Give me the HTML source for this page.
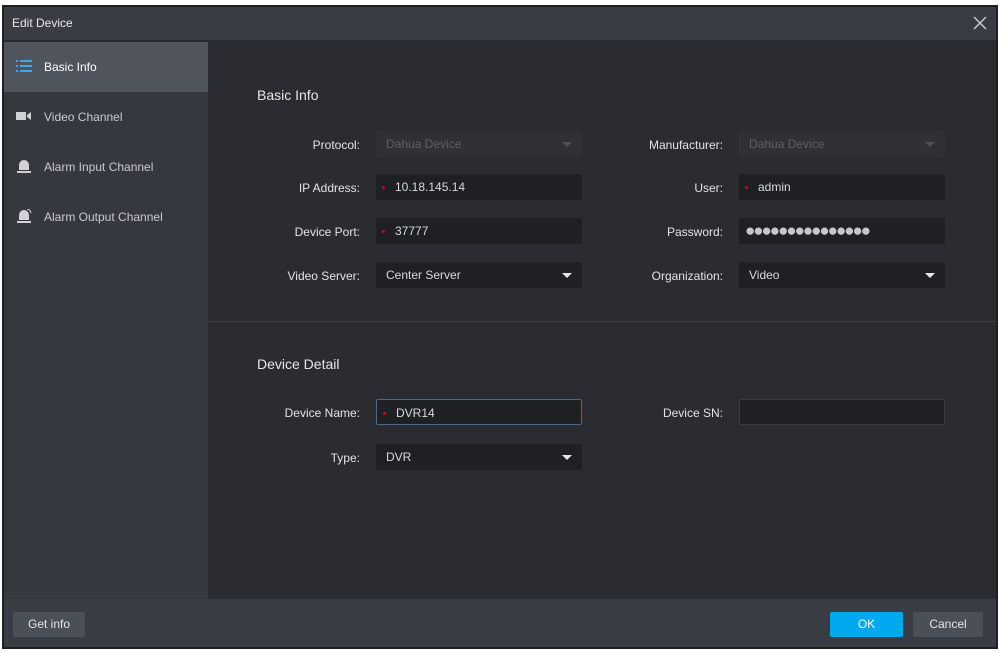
<!DOCTYPE html>
<html><head><meta charset="utf-8"><style>
*{margin:0;padding:0;box-sizing:border-box}
body{width:1000px;height:653px;background:#fff;font-family:"Liberation Sans",sans-serif;font-size:12px;color:#d8d9dc;position:relative;overflow:hidden}
.frame{position:absolute;left:2px;top:5px;width:996px;height:644px;background:#2a2c31;border:2px solid #1f2024}
.title{position:absolute;left:0;top:0;width:992px;height:33px;background:#393c42;color:#e8e8e8;font-size:12px;line-height:33px;padding-left:8px}
.x{position:absolute;right:6px;top:6px;width:20px;height:20px}
.side{position:absolute;left:0;top:35px;width:204px;height:557px;background:#35383e}
.item{position:absolute;left:0;width:204px;height:50px;line-height:50px;padding-left:40px;color:#c9cbcf;font-size:12px}
.item.sel{background:#50545d;color:#fff}
.ic{position:absolute;left:12px;top:17px}
.main{position:absolute;left:200px;top:35px;width:792px;height:557px}
.sep{position:absolute;left:4px;top:279px;width:788px;height:1px;background:#3a3d43}
h3{position:absolute;font-weight:normal;font-size:14px;color:#e6e6e6}
.lbl{position:absolute;width:150px;text-align:right;color:#e2e3e5;font-size:12px}
.in{position:absolute;width:206px;height:26px;background:#1e2024;border-radius:2px;line-height:26px;padding-left:10px;color:#d8d9dc;font-size:12px}
.in.dis{background:#2f3136;color:#5c5f65}
.dot{display:inline-block;width:3px;height:3px;background:#d0021b;border-radius:50%;vertical-align:middle;margin-right:10px;margin-left:-4px}
.arr{position:absolute;right:10px;top:11px;width:0;height:0;border-left:5px solid transparent;border-right:5px solid transparent;border-top:5px solid #e6e6e6}
.dis .arr{border-top-color:#4e5157}
.foot{position:absolute;left:0;top:592px;width:992px;height:48px;background:#393c42}
.btn{position:absolute;top:13px;height:25px;line-height:25px;text-align:center;background:#4b4f57;color:#e6e6e6;font-size:12px;border-radius:2px}
.pw{letter-spacing:-2px;font-size:17px;color:#c4c7cc;padding-left:6px}
</style></head><body>
<div class="frame">
<div class="title">Edit Device
<svg class="x" viewBox="0 0 20 20"><path d="M4 4L16 16M16 4L4 16" stroke="#c8c9cc" stroke-width="1.5"/></svg></div>
<div class="side">
<div class="item sel" style="top:0">
<svg class="ic" width="16" height="14" viewBox="0 0 16 14"><g fill="#3aa8e6"><rect x="0" y="1" width="2" height="2"/><rect x="4" y="1" width="12" height="2"/><rect x="0" y="6" width="2" height="2"/><rect x="4" y="6" width="12" height="2"/><rect x="0" y="11" width="2" height="2"/><rect x="4" y="11" width="12" height="2"/></g></svg>Basic Info</div>
<div class="item" style="top:50px"><svg class="ic" width="16" height="14" viewBox="0 0 16 14"><rect x="0" y="3" width="10" height="8" fill="#d0d2d6"/><path d="M11 6L15 3V11L11 8Z" fill="#d0d2d6"/></svg>Video Channel</div>
<div class="item" style="top:100px"><svg class="ic" width="16" height="14" viewBox="0 0 16 14"><path d="M3 11V6A5 5 0 0 1 13 6V11Z" fill="#d0d2d6"/><rect x="1" y="12" width="14" height="2" fill="#d0d2d6"/></svg>Alarm Input Channel</div>
<div class="item" style="top:150px"><svg class="ic" width="16" height="14" viewBox="0 0 16 14"><path d="M3 11V6A5 5 0 0 1 13 6V11Z" fill="#d0d2d6"/><rect x="1" y="12" width="14" height="2" fill="#d0d2d6"/><path d="M11 0A5 5 0 0 1 15 4" stroke="#d0d2d6" fill="none"/></svg>Alarm Output Channel</div>
</div>
<div class="main">
<h3 style="left:53px;top:45px">Basic Info</h3>
<div class="lbl" style="left:6px;top:96px">Protocol:</div>
<div class="in dis" style="left:172px;top:89px">Dahua Device<div class="arr"></div></div>
<div class="lbl" style="left:6px;top:139px">IP Address:</div>
<div class="in" style="left:172px;top:132px"><span class="dot"></span>10.18.145.14</div>
<div class="lbl" style="left:6px;top:183px">Device Port:</div>
<div class="in" style="left:172px;top:176px"><span class="dot"></span>37777</div>
<div class="lbl" style="left:6px;top:227px">Video Server:</div>
<div class="in" style="left:172px;top:220px">Center Server<div class="arr"></div></div>
<div class="lbl" style="left:369px;top:96px">Manufacturer:</div>
<div class="in dis" style="left:535px;top:89px">Dahua Device<div class="arr"></div></div>
<div class="lbl" style="left:369px;top:139px">User:</div>
<div class="in" style="left:535px;top:132px"><span class="dot"></span>admin</div>
<div class="lbl" style="left:369px;top:183px">Password:</div>
<div class="in pw" style="left:535px;top:176px">●●●●●●●●●●●●●●●</div>
<div class="lbl" style="left:369px;top:227px">Organization:</div>
<div class="in" style="left:535px;top:220px">Video<div class="arr"></div></div>
<div class="sep"></div>
<h3 style="left:53px;top:314px">Device Detail</h3>
<div class="lbl" style="left:6px;top:364px">Device Name:</div>
<div class="in" style="left:172px;top:357px;border:1px solid #4a6a8a"><span class="dot"></span>DVR14</div>
<div class="lbl" style="left:6px;top:409px">Type:</div>
<div class="in" style="left:172px;top:402px">DVR<div class="arr"></div></div>
<div class="lbl" style="left:369px;top:364px">Device SN:</div>
<div class="in" style="left:535px;top:357px;border:1px solid #3a3d43"></div>
</div>
<div class="foot">
<div class="btn" style="left:9px;width:72px">Get info</div>
<div class="btn" style="left:826px;width:73px;background:#00a8f0;color:#fff">OK</div>
<div class="btn" style="left:909px;width:70px">Cancel</div>
</div>
</div>
</body></html>
